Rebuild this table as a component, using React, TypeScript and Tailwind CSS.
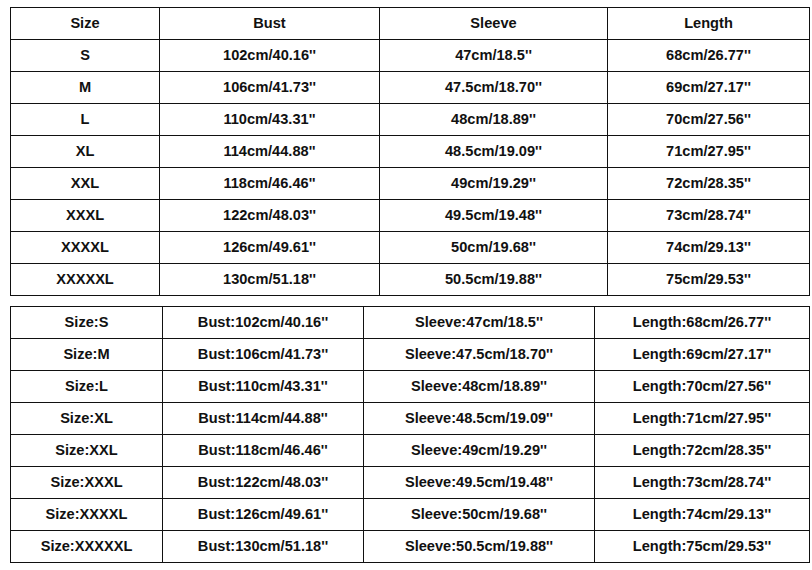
import React from "react";

const t1 = [
  ["S", "102cm/40.16''", "47cm/18.5''", "68cm/26.77''"],
  ["M", "106cm/41.73''", "47.5cm/18.70''", "69cm/27.17''"],
  ["L", "110cm/43.31''", "48cm/18.89''", "70cm/27.56''"],
  ["XL", "114cm/44.88''", "48.5cm/19.09''", "71cm/27.95''"],
  ["XXL", "118cm/46.46''", "49cm/19.29''", "72cm/28.35''"],
  ["XXXL", "122cm/48.03''", "49.5cm/19.48''", "73cm/28.74''"],
  ["XXXXL", "126cm/49.61''", "50cm/19.68''", "74cm/29.13''"],
  ["XXXXXL", "130cm/51.18''", "50.5cm/19.88''", "75cm/29.53''"],
];

function Cell({ children }: { children: React.ReactNode }) {
  return (
    <div className="flex items-center justify-center border-r border-b border-[#111] text-[14.6px] font-bold text-[#111] whitespace-nowrap">
      {children}
    </div>
  );
}

export default function App() {
  return (
    <div
      className="w-[812px] h-[570px] bg-white overflow-hidden"
      style={{ fontFamily: '"Liberation Sans", Arial, sans-serif' }}
    >
      <div className="flex flex-col pt-[7px] pl-[10px]">
        <div className="grid w-[800px] grid-cols-[149px_220px_228px_202px] auto-rows-[32px] border-t border-l border-[#111]">
          <Cell>Size</Cell>
          <Cell>Bust</Cell>
          <Cell>Sleeve</Cell>
          <Cell>Length</Cell>
          {t1.map((r, i) => (
            <React.Fragment key={i}>
              <Cell>{r[0]}</Cell>
              <Cell>{r[1]}</Cell>
              <Cell>{r[2]}</Cell>
              <Cell>{r[3]}</Cell>
            </React.Fragment>
          ))}
        </div>
        <div className="mt-[10px] grid w-[800px] grid-cols-[152px_201px_231px_215px] auto-rows-[32px] border-t border-l border-[#111]">
          {t1.map((r, i) => (
            <React.Fragment key={i}>
              <Cell>Size:{r[0]}</Cell>
              <Cell>Bust:{r[1]}</Cell>
              <Cell>Sleeve:{r[2]}</Cell>
              <Cell>Length:{r[3]}</Cell>
            </React.Fragment>
          ))}
        </div>
      </div>
    </div>
  );
}
